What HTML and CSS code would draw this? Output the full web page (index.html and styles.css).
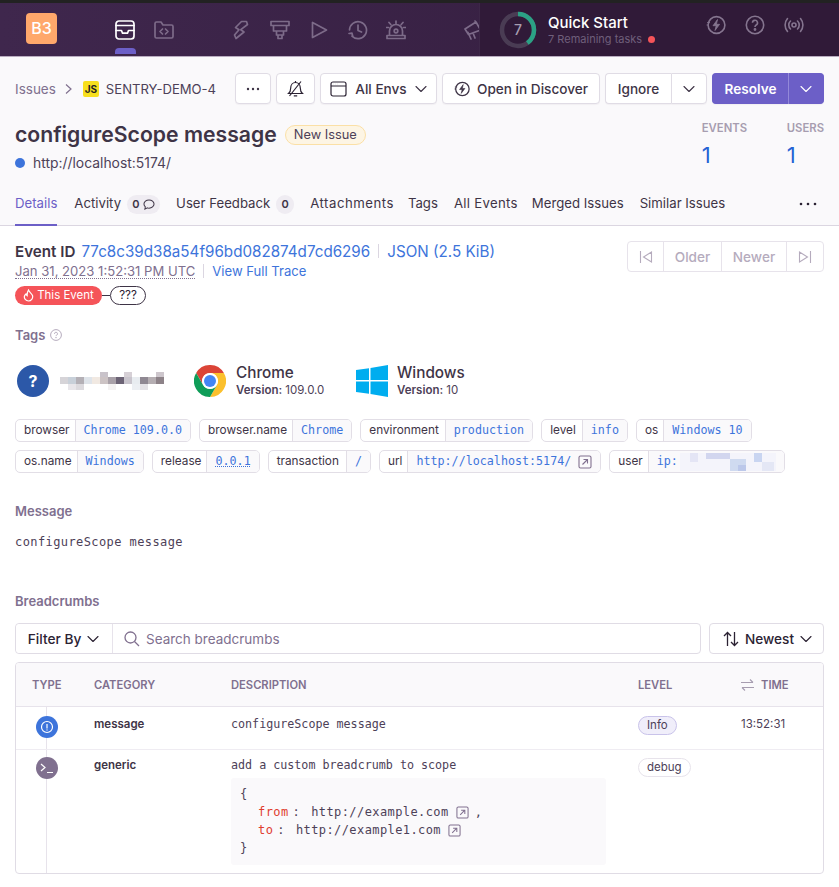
FILE: index.html
```html
<!DOCTYPE html>
<html lang="en">
<head>
    <meta charset="UTF-8">
    <meta name="viewport" content="width=device-width, initial-scale=1.0">
    <title>configureScope message</title>
    <link rel="stylesheet" href="styles.css">
</head>
<body>
    <svg class="sprite" width="0" height="0">
        <defs>
            <symbol id="chev" viewBox="0 0 12 12"><path d="M1 3.5l5 5 5-5" fill="none" stroke="currentColor" stroke-width="1.1" stroke-linecap="round" stroke-linejoin="round"/></symbol>
            <symbol id="ext" viewBox="0 0 14 14"><rect x="1" y="1" width="12" height="12" rx="1.5" fill="none" stroke="currentColor" stroke-width="1.1"/><path d="M4.5 9.5l5-5M5.5 4.5h4v4" fill="none" stroke="currentColor" stroke-width="1.1"/></symbol>
            <symbol id="bolt" viewBox="0 0 20 20"><circle cx="10.5" cy="10" r="8.4" fill="none" stroke="currentColor" stroke-width="1.6"/><path d="M1 7.5h3M0.5 10h2M11.5 4.5L7 10.7h3.2L9 15.5l4.6-6.2h-3.2z" fill="currentColor" stroke="currentColor" stroke-width="0.8" stroke-linejoin="round"/></symbol>
        </defs>
    </svg>

    <nav class="topbar">
        <div class="nav-left">
            <div class="org-badge">B3</div>
            <div class="nav-icons">
                <a class="nav-item active">
                    <svg viewBox="0 0 20 20"><rect x="1" y="1" width="18" height="18" rx="3"/><path d="M1 5.5h18M1 10.5h5.5l1 2.7h5l1-2.7H19"/></svg>
                </a>
                <a class="nav-item">
                    <svg viewBox="0 0 20 20"><path d="M1 3.5A1.5 1.5 0 0 1 2.500 2h4.500l2 3h8.500A1.500 1.500 0 0 1 19 6.500v10a1.500 1.500 0 0 1-1.500 1.500h-15A1.500 1.500 0 0 1 1 16.500z"/><path d="M8.500 9L6 11.500 8.500 14M11.500 9L14 11.500 11.500 14"/></svg>
                </a>
                <a class="nav-item gap">
                    <svg viewBox="0 0 20 20"><path d="M10.500 1.500L4.500 7.500l3.500 2.200L3.500 15l1.500 3.500 8-6.500-3.200-2.300L16.500 4.500l-1-3z"/></svg>
                </a>
                <a class="nav-item">
                    <svg viewBox="0 0 20 20"><path d="M1 1.500h18v4H1zM3.500 5.500v5.500h13V5.500M6.500 11v4h7v-4M8 15v3.500h4V15"/></svg>
                </a>
                <a class="nav-item">
                    <svg viewBox="0 0 20 20"><path d="M3.500 2.500v15L17.500 10z"/></svg>
                </a>
                <a class="nav-item">
                    <svg viewBox="0 0 20 20"><path d="M1.500 10A8.500 8.500 0 1 1 4 16.200M1 13.500l3-.3.800 3.300M10 5v5.500l3.500 1.500"/></svg>
                </a>
                <a class="nav-item siren">
                    <svg viewBox="0 0 20 20"><path d="M1 18.500h18v-3H1zM3.500 15.500V11a6.500 6.500 0 0 1 13 0v4.500M10 1v2.500M3 2.500l1.800 2M17 2.500l-1.800 2M0 7.500h2.500M17.500 7.500H20"/><circle cx="10" cy="11" r="1.800"/></svg>
                </a>
                <a class="nav-item gap wide">
                    <svg viewBox="0 0 20 20"><path d="M2 9l11-7 4.500 8-12 4.500zM5 12.500L8 19M10 13l2 5M13 2l-1-1"/></svg>
                </a>
            </div>
        </div>
        <div class="quick">
            <svg class="ring" width="38" height="38" viewBox="0 0 38 38">
                <circle cx="19" cy="19" r="16" fill="none" stroke="#4a3c54" stroke-width="4.500"/>
                <circle cx="19" cy="19" r="16" fill="none" stroke="#2ba185" stroke-width="4.500" stroke-dasharray="40 101" transform="rotate(-90 19 19)"/>
                <text x="19" y="24" text-anchor="middle" class="ring-num">7</text>
            </svg>
            <div class="quick-text">
                <div class="quick-title">Quick Start</div>
                <div class="quick-sub">7 Remaining tasks <span class="red-dot"></span></div>
            </div>
            <div class="quick-icons">
                <svg width="20" height="20"><use href="#bolt"/></svg>
                <svg width="20" height="20" viewBox="0 0 20 20" fill="none" stroke="currentColor" stroke-width="1.600"><circle cx="10" cy="10" r="8.700"/><path d="M7.500 7.800a2.500 2.500 0 1 1 3.700 2.200c-.8.500-1.200 1-1.200 2"/><circle cx="10" cy="14.500" r=".6" fill="currentColor"/></svg>
                <svg width="20" height="20" viewBox="0 0 20 20" fill="none" stroke="currentColor" stroke-width="1.600" stroke-linecap="round"><circle cx="10" cy="10" r="2"/><path d="M6.500 6a5.500 5.500 0 0 0 0 8M13.500 6a5.500 5.500 0 0 1 0 8M3.500 3.500a10 10 0 0 0 0 13M16.500 3.500a10 10 0 0 1 0 13"/></svg>
            </div>
        </div>
    </nav>

    <header class="issue-header">
        <div class="crumb-row">
            <div class="crumbs">
                <span class="crumb-link">Issues</span>
                <svg class="crumb-sep" width="10" height="12" viewBox="0 0 10 12"><path d="M2 1.500L7 6l-5 4.500" fill="none" stroke="currentColor" stroke-width="1.200"/></svg>
                <span class="js-badge">JS</span>
                <span class="crumb-id">SENTRY-DEMO-4</span>
            </div>
            <div class="actions">
                <button class="btn btn-more">
                    <svg width="16" height="4" viewBox="0 0 16 4" fill="#3e3446"><circle cx="3" cy="2" r="1.200"/><circle cx="8" cy="2" r="1.200"/><circle cx="13" cy="2" r="1.200"/></svg>
                </button>
                <button class="btn btn-mute">
                    <svg width="17" height="17" viewBox="0 0 17 17" fill="none" stroke="#2b2233" stroke-width="1.200"><path d="M1.500 13.500h14c-1.300-1-2.200-2-2.200-5.500 0-3-2-5.500-4.800-5.500S3.700 5 3.700 8c0 3.500-.9 4.500-2.200 5.500zM6.800 15.800h3.400M8.500 1v1.500M14 1.500L2.500 16"/></svg>
                </button>
                <button class="btn btn-envs">
                    <svg width="17" height="16" viewBox="0 0 17 16" fill="none" stroke="#2b2233" stroke-width="1.200"><rect x="1" y="1" width="15" height="14" rx="2"/><path d="M1 5h15M3.500 3h.1M5.500 3h.1M7.500 3h.1"/></svg>
                    <span>All Envs</span>
                    <svg class="chev" width="12" height="12"><use href="#chev"/></svg>
                </button>
                <button class="btn btn-discover">
                    <svg width="16" height="16"><use href="#bolt"/></svg>
                    <span>Open in Discover</span>
                </button>
                <div class="btn-group">
                    <button class="btn btn-ignore">Ignore</button>
                    <button class="btn btn-caret"><svg class="chev" width="12" height="12"><use href="#chev"/></svg></button>
                </div>
                <div class="btn-group primary">
                    <button class="btn btn-ignore btn-resolve">Resolve</button>
                    <button class="btn btn-caret"><svg class="chev" width="12" height="12"><use href="#chev"/></svg></button>
                </div>
            </div>
        </div>

        <div class="title-row">
            <div>
                <div class="title-line">
                    <h1>configureScope message</h1>
                    <span class="new-tag">New Issue</span>
                </div>
                <div class="sub-line"><span class="blue-dot"></span>http://localhost:5174/</div>
            </div>
            <div class="stats">
                <div class="stat stat-events"><div class="stat-label">EVENTS</div><div class="stat-num">1</div></div>
                <div class="stat"><div class="stat-label">USERS</div><div class="stat-num">1</div></div>
            </div>
        </div>

        <div class="tabs">
            <a class="tab selected">Details</a>
            <a class="tab">Activity <span class="count">0 <svg width="12" height="11" viewBox="0 0 13 12" fill="none" stroke="currentColor" stroke-width="1.100"><path d="M6.500 1C3.500 1 1 3 1 5.500c0 1.200.6 2.300 1.500 3L2 11l2.800-1.300c.5.200 1.100.3 1.700.3 3 0 5.500-2 5.500-4.500S9.500 1 6.500 1z"/></svg></span></a>
            <a class="tab">User Feedback <span class="count">0</span></a>
            <a class="tab tab-attach">Attachments</a>
            <a class="tab">Tags</a>
            <a class="tab tab-events">All Events</a>
            <a class="tab">Merged Issues</a>
            <a class="tab">Similar Issues</a>
            <span class="tab-more"><svg width="18" height="4" viewBox="0 0 18 4" fill="#2b2233"><circle cx="2" cy="2" r="1.300"/><circle cx="9" cy="2" r="1.300"/><circle cx="16" cy="2" r="1.300"/></svg></span>
        </div>
    </header>

    <main class="content">
        <section class="event-row">
            <div>
                <div class="event-line">
                    <b>Event ID</b> <a class="link">77c8c39d38a54f96bd082874d7cd6296</a>
                    <span class="pipe"></span>
                    <a class="link">JSON (2.5 KiB)</a>
                </div>
                <div class="event-line second">
                    <span class="event-date">Jan 31, 2023 1:52:31 PM UTC</span>
                    <span class="pipe"></span>
                    <a class="link">View Full Trace</a>
                </div>
            </div>
            <div class="pager">
                <span class="pg pg-icon"><svg width="14" height="12" viewBox="0 0 14 12" fill="none" stroke="currentColor" stroke-width="1.100"><path d="M1.500 0v12M12.500 1v10L4.500 6z"/></svg></span>
                <span class="pg pg-older">Older</span>
                <span class="pg pg-newer">Newer</span>
                <span class="pg pg-icon"><svg width="14" height="12" viewBox="0 0 14 12" fill="none" stroke="currentColor" stroke-width="1.100"><path d="M12.500 0v12M1.500 1v10L9.500 6z"/></svg></span>
            </div>
        </section>

        <div class="trail">
            <span class="this-event">
                <svg width="11" height="13" viewBox="0 0 11 13" fill="none" stroke="#fff" stroke-width="1.200"><path d="M5.500 1c.5 2 3 3 4 5.500C10.300 9.500 8 12 5.500 12S.7 9.500 1.500 7c.3-1 1-1.500 1.500-2 .2 1 .6 1.500 1.200 1.800C4 4.500 4.500 2.500 5.500 1z"/></svg>
                This Event
            </span>
            <span class="trail-line"></span>
            <span class="unknown">???</span>
        </div>

        <h2 class="section-title tags-title">Tags
            <svg width="12" height="12" viewBox="0 0 12 12" fill="none" stroke="#b5abbd"><circle cx="6" cy="6" r="5.400"/><path d="M4.500 4.800a1.500 1.500 0 1 1 2.200 1.300c-.5.300-.7.500-.7 1"/><circle cx="6" cy="8.700" r=".3"/></svg>
        </h2>

        <div class="contexts">
            <div class="context ctx-user">
                <span class="q-icon">?</span>
                <svg class="mosaic" width="104" height="18" viewBox="0 0 104 18">
                    <g fill="#e0dce0"><rect x="40" y="0" width="8" height="5" fill="#c9c3ca"/><rect x="64" y="0" width="8" height="5" fill="#d6d0d6"/><rect x="96" y="0" width="8" height="5" fill="#cdc6cc"/>
                    <rect x="0" y="5" width="8" height="7" fill="#d6d4d8"/><rect x="8" y="5" width="8" height="7" fill="#c8d0d9"/><rect x="16" y="5" width="8" height="7" fill="#b4b0b6"/><rect x="24" y="5" width="8" height="7" fill="#dfe4ea"/><rect x="32" y="5" width="8" height="7" fill="#f1e9e2"/><rect x="40" y="5" width="8" height="7" fill="#ccc3c4"/><rect x="48" y="5" width="8" height="7" fill="#a8a0a8"/><rect x="56" y="5" width="8" height="7" fill="#6c6375"/><rect x="64" y="5" width="8" height="7" fill="#c9c5cd"/><rect x="72" y="5" width="8" height="7" fill="#e8ecf0"/><rect x="80" y="5" width="8" height="7" fill="#8f8892"/><rect x="88" y="5" width="8" height="7" fill="#b5aeb2"/><rect x="96" y="5" width="8" height="7" fill="#8d8288"/>
                    <rect x="8" y="12" width="8" height="6" fill="#e8e6ea"/><rect x="16" y="12" width="8" height="6" fill="#dcdade"/><rect x="48" y="12" width="8" height="6" fill="#f4f2f2"/><rect x="72" y="12" width="8" height="6" fill="#eceff3"/><rect x="80" y="12" width="8" height="6" fill="#e4e2e6"/></g>
                </svg>
            </div>
            <div class="context ctx-chrome">
                <svg width="32" height="32" viewBox="0 0 32 32">
                    <path fill="#db4437" d="M29.860 8A16 16 0 0 0 2.140 8L9.070 20A8 8 0 0 1 16 8z"/>
                    <path fill="#fbc02d" transform="rotate(120 16 16)" d="M29.860 8A16 16 0 0 0 2.140 8L9.070 20A8 8 0 0 1 16 8z"/>
                    <path fill="#0f9d58" transform="rotate(240 16 16)" d="M29.860 8A16 16 0 0 0 2.140 8L9.070 20A8 8 0 0 1 16 8z"/>
                    <circle cx="16" cy="16" r="7.800" fill="#fff"/>
                    <circle cx="16" cy="16" r="6" fill="#4285f4"/>
                </svg>
                <div class="ctx-text"><div class="ctx-name">Chrome</div><div class="ctx-ver"><b>Version:</b> 109.0.0</div></div>
            </div>
            <div class="context ctx-win">
                <svg width="32" height="32" viewBox="0 0 32 32" fill="#00adef">
                    <path d="M0 5l13-1.800V15H0zM14.500 3L32 0v15H14.500zM0 16.500h13v12.300L0 27zM14.500 16.500H32V32l-17.500-2.900z"/>
                </svg>
                <div class="ctx-text"><div class="ctx-name">Windows</div><div class="ctx-ver"><b>Version:</b> 10</div></div>
            </div>
        </div>

        <div class="tag-list">
            <div class="tag-row">
                <span class="tag"><span class="tag-key">browser</span><span class="tag-val">Chrome 109.0.0</span></span>
                <span class="tag"><span class="tag-key">browser.name</span><span class="tag-val">Chrome</span></span>
                <span class="tag"><span class="tag-key key-mid">environment</span><span class="tag-val">production</span></span>
                <span class="tag"><span class="tag-key key-mid">level</span><span class="tag-val">info</span></span>
                <span class="tag"><span class="tag-key">os</span><span class="tag-val">Windows 10</span></span>
            </div>
            <div class="tag-row">
                <span class="tag"><span class="tag-key">os.name</span><span class="tag-val">Windows</span></span>
                <span class="tag"><span class="tag-key">release</span><span class="tag-val"><u>0.0.1</u></span></span>
                <span class="tag"><span class="tag-key key-wide">transaction</span><span class="tag-val">/</span></span>
                <span class="tag"><span class="tag-key">url</span><span class="tag-val">http://localhost:5174/<svg class="ext" width="14" height="14"><use href="#ext"/></svg></span></span>
                <span class="tag"><span class="tag-key">user</span><span class="tag-val user-val">ip:<svg class="mosaic-ip" width="96" height="18" viewBox="0 0 96 18"><rect width="96" height="18" fill="#f4f4fb"/><rect x="10" y="0" width="8" height="9" fill="#e4e5f5"/><rect x="26" y="0" width="24" height="6" fill="#d2d6ef"/><rect x="50" y="6" width="16" height="12" fill="#cfdaf0"/><rect x="58" y="12" width="8" height="6" fill="#bcc8ea"/><rect x="74" y="0" width="8" height="9" fill="#c9d5f1"/><rect x="82" y="9" width="12" height="9" fill="#e4e7f5"/></svg></span></span>
            </div>
        </div>

        <h2 class="section-title msg-title">Message</h2>
        <pre class="message">configureScope message</pre>

        <h2 class="section-title bc-title">Breadcrumbs</h2>
        <div class="bc-controls">
            <div class="bc-search">
                <button class="filter-btn">Filter By <svg class="chev" width="12" height="12"><use href="#chev"/></svg></button>
                <div class="search-box">
                    <svg width="16" height="16" viewBox="0 0 16 16" fill="none" stroke="#80708f" stroke-width="1.300"><circle cx="6.500" cy="6.500" r="5.500"/><path d="M10.500 10.500L15 15"/></svg>
                    <span>Search breadcrumbs</span>
                </div>
            </div>
            <button class="sort-btn">
                <svg width="16" height="16" viewBox="0 0 16 16" fill="none" stroke="#2b2233" stroke-width="1.300"><path d="M4.500 15V1.500M1 5l3.500-3.500L8 5M11.500 1v13.500M8 11l3.500 3.500L15 11"/></svg>
                Newest <svg class="chev" width="12" height="12"><use href="#chev"/></svg>
            </button>
        </div>

        <div class="bc-table">
            <span class="bc-rail"></span>
            <div class="bc-grid bc-head">
                <span class="col-type">TYPE</span>
                <span>CATEGORY</span>
                <span>DESCRIPTION</span>
                <span>LEVEL</span>
                <span class="time-head"><svg width="13" height="12" viewBox="0 0 13 12" fill="none" stroke="#a79db0" stroke-width="1.100"><path d="M0 3.500h12M9 .5l3 3M13 8.500H1M4 11.500l-3-3"/></svg>TIME</span>
            </div>
            <div class="bc-grid bc-row row-one">
                <span class="type-icon info"><svg width="14" height="14" viewBox="0 0 14 14" fill="none" stroke="#fff" stroke-width="1.200"><circle cx="7" cy="7" r="5.500"/><path d="M7 4v4.500"/><circle cx="7" cy="10" r=".2"/></svg></span>
                <span class="cat">message</span>
                <span class="desc">configureScope message</span>
                <span><span class="level l-info">Info</span></span>
                <span class="time">13:52:31</span>
            </div>
            <div class="bc-grid bc-row row-two">
                <span class="type-icon debug"><svg width="14" height="12" viewBox="0 0 14 12" fill="none" stroke="#fff" stroke-width="1.200"><path d="M1 2l4 3.500L1 9M7 10.500h6"/></svg></span>
                <span class="cat">generic</span>
                <div class="desc">
                    add a custom breadcrumb to scope
                    <div class="code">
                        <div>{</div>
                        <div class="indent"><span class="key">from</span><span class="colon">:</span>http://example.com<svg class="ext-sm" width="13" height="13"><use href="#ext"/></svg><span class="comma">,</span></div>
                        <div class="indent"><span class="key">to</span><span class="colon">:</span>http://example1.com<svg class="ext-sm" width="13" height="13"><use href="#ext"/></svg></div>
                        <div>}</div>
                    </div>
                </div>
                <span class="level-cell"><span class="level">debug</span></span>
                <span></span>
            </div>
        </div>
    </main>
</body>
</html>
```
FILE: styles.css
```css
* {
    box-sizing: border-box;
}
body {
    margin: 0;
    background-color: #fff;
    color: #2b2233;
    font-family: Inter, 'Noto Sans', sans-serif;
    font-size: 13.5px;
    overflow-x: hidden;
}
.sprite {
    position: absolute;
}
button {
    font-family: inherit;
    background: #fff;
    cursor: pointer;
}
a {
    text-decoration: none;
}

/* top nav */
.topbar {
    display: flex;
    height: 57px;
    border-top: 3px solid #222;
    border-bottom: 1px solid #b9acc0;
    background: linear-gradient(90deg, #3f274d, #341d3e);
}
.nav-left {
    display: flex;
    width: 479px;
    flex: none;
    overflow: hidden;
    padding-left: 26px;
}
.org-badge {
    width: 31px;
    height: 31px;
    margin-top: 10px;
    flex: none;
    border-radius: 4px;
    background-color: #ffa86b;
    color: #fff;
    font-size: 16px;
    font-weight: 500;
    line-height: 31px;
    text-align: center;
}
.nav-icons {
    display: flex;
    margin-left: 58px;
}
.nav-item {
    position: relative;
    width: 21px;
    margin-right: 18px;
    padding-top: 17px;
    flex: none;
}
.nav-item svg {
    display: block;
    width: 20px;
    height: 20px;
    fill: none;
    stroke: #7d6b89;
    stroke-width: 1.700;
    stroke-linejoin: round;
    stroke-linecap: round;
}
.nav-item.gap {
    margin-left: 38px;
}
.nav-item.siren {
    margin-left: -1px;
}
.nav-item.wide {
    margin-left: 38px;
}
.nav-item.active svg {
    stroke: #fff;
}
.nav-item.active::after {
    content: "";
    position: absolute;
    left: 0;
    bottom: 2px;
    width: 21px;
    height: 6px;
    border-radius: 4px 4px 0 0;
    background-color: #6c5fc7;
}
.quick {
    display: flex;
    flex: 1;
    align-items: center;
    padding-left: 19px;
    background-color: #301a38;
    border-left: 1px solid #3d2748;
}
.ring {
    flex: none;
}
.ring-num {
    fill: #a79db0;
    font-size: 14px;
    font-weight: 500;
}
.quick-text {
    margin-left: 11px;
    padding-top: 1px;
}
.quick-title {
    color: #fff;
    font-size: 15px;
    font-weight: 500;
    line-height: 18px;
}
.quick-sub {
    color: #6f5f7b;
    font-size: 11px;
    line-height: 15px;
}
.red-dot {
    display: inline-block;
    width: 7px;
    height: 7px;
    margin-left: 3px;
    border-radius: 50%;
    background-color: #f55459;
}
.quick-icons {
    display: flex;
    gap: 19px;
    margin-left: 51px;
    padding-bottom: 10px;
    color: #85758f;
}

/* issue header */
.issue-header {
    height: 169px;
    padding: 16px 15px 0;
    background-color: #faf9fb;
    border-bottom: 1px solid #dbd6e1;
}
.crumb-row {
    display: flex;
    justify-content: space-between;
    height: 31px;
}
.crumbs {
    display: flex;
    align-items: center;
}
.crumb-link {
    color: #80708f;
}
.crumb-sep {
    margin: 0 9px 0 8px;
    color: #80708f;
}
.js-badge {
    width: 16px;
    height: 16px;
    margin-right: 7px;
    border-radius: 2px;
    background-color: #f7df1e;
    color: #222;
    font-size: 10px;
    font-weight: 700;
    line-height: 17px;
    text-align: center;
}
.crumb-id {
    color: #4d4158;
    font-size: 13.100px;
}
.actions {
    display: flex;
    gap: 5px;
}
.btn {
    display: flex;
    height: 31px;
    align-items: center;
    justify-content: center;
    padding: 0;
    border: 1px solid #e0dce5;
    border-radius: 4px;
    color: #3e3446;
    font-size: 13.600px;
    font-weight: 500;
    box-shadow: 0 1px 1px rgba(43, 34, 51, 0.04);
}
.btn-more {
    width: 36px;
}
.btn-mute {
    width: 39px;
}
.btn-envs {
    width: 117px;
    gap: 8px;
}
.btn-discover {
    width: 158px;
    gap: 7px;
}
.btn-group {
    display: flex;
}
.btn-ignore {
    width: 66px;
    border-radius: 4px 0 0 4px;
    border-right: 0;
}
.btn-caret {
    width: 36px;
    border-radius: 0 4px 4px 0;
}
.primary .btn {
    background-color: #6c5fc7;
    border-color: #6c5fc7;
    color: #fff;
}
.primary .btn-resolve {
    width: 76px;
    font-weight: 600;
}
.primary .btn-caret {
    border-left-color: #9389d9;
}
.title-row {
    display: flex;
    justify-content: space-between;
    height: 84px;
    padding-top: 17px;
}
.title-line {
    display: flex;
    align-items: center;
    gap: 8px;
}
h1 {
    margin: 0;
    font-size: 21.200px;
    font-weight: 600;
    line-height: 27px;
    color: #3e3446;
}
.new-tag {
    height: 20px;
    margin-top: 1px;
    padding: 0 8px;
    border: 1px solid #fbe0a6;
    border-radius: 10px;
    background-color: #fdf5e4;
    color: #4d4158;
    font-size: 12.800px;
    line-height: 18px;
}
.sub-line {
    display: flex;
    align-items: center;
    gap: 8px;
    margin-top: 6px;
    color: #4d4158;
    font-size: 13.900px;
    line-height: 18px;
}
.blue-dot {
    width: 10px;
    height: 10px;
    border-radius: 50%;
    background-color: #3d74db;
}
.stats {
    display: flex;
}
.stat-events {
    width: 85px;
}
.stat-label {
    color: #a79db0;
    font-size: 11.300px;
    font-weight: 600;
    line-height: 14px;
}
.stat-num {
    margin-top: 6px;
    color: #2562d4;
    font-size: 22px;
    line-height: 28px;
}
.tabs {
    display: flex;
    height: 37px;
    margin-top: 1px;
}
.tab {
    display: block;
    height: 37px;
    margin-right: 16px;
    color: #3e3446;
    font-size: 13.200px;
    line-height: 28px;
    white-space: nowrap;
}
.tab.selected {
    margin-right: 17px;
    color: #6c5fc7;
    border-bottom: 2px solid #6c5fc7;
}
.tab-attach {
    margin-right: 14px;
    letter-spacing: 0.5px;
}
.tab-events {
    margin-right: 14px;
    letter-spacing: 0.3px;
}
.count {
    display: inline-flex;
    align-items: center;
    gap: 3px;
    height: 19px;
    margin-left: 2px;
    padding: 0 5.500px;
    border-radius: 10px;
    background-color: #efecf2;
    font-size: 11px;
    font-weight: 600;
}
.tab-more {
    margin-left: auto;
    margin-right: 7px;
    line-height: 24px;
}

/* main */
.content {
    padding: 0 15px;
}
.event-row {
    display: flex;
    justify-content: space-between;
    padding-top: 15px;
    height: 59px;
}
.event-line {
    display: flex;
    align-items: center;
    gap: 4px;
    height: 20px;
    font-size: 15.200px;
    color: #3e3446;
    white-space: nowrap;
}
.event-line b {
    margin-right: 2px;
    font-weight: 600;
}
.event-line.second {
    font-size: 13.100px;
}
.link {
    color: #3d74db;
}
.pipe {
    width: 1px;
    height: 14px;
    margin: 0 4px;
    background-color: #dbd6e1;
}
.event-date {
    color: #80708f;
    border-bottom: 1px dotted #80708f;
    line-height: 14px;
}
.pager {
    display: flex;
    height: 31px;
    border: 1px solid #e7e3eb;
    border-radius: 4px;
    color: #b5abbd;
    font-size: 13.600px;
    font-weight: 500;
}
.pg {
    display: flex;
    align-items: center;
    justify-content: center;
    border-right: 1px solid #e7e3eb;
}
.pg:last-child {
    border-right: 0;
}
.pg-icon {
    width: 36px;
}
.pg-older {
    width: 58px;
}
.pg-newer {
    width: 65px;
}
.trail {
    display: flex;
    align-items: center;
    height: 20px;
}
.this-event {
    display: flex;
    align-items: center;
    gap: 3px;
    width: 87px;
    height: 19px;
    justify-content: center;
    border-radius: 10px;
    background-color: #f55459;
    color: #fff;
    font-size: 11.500px;
}
.trail-line {
    width: 8px;
    height: 1px;
    background-color: #3e3446;
}
.unknown {
    width: 36px;
    height: 19px;
    border: 1px solid #3e3446;
    border-radius: 10px;
    font-size: 11.500px;
    line-height: 17px;
    text-align: center;
}
.section-title {
    margin: 0;
    color: #80708f;
    font-size: 13px;
    font-weight: 600;
    line-height: 18px;
}
.tags-title {
    display: flex;
    align-items: center;
    gap: 5px;
    margin-top: 21px;
}
.contexts {
    display: flex;
    height: 33px;
    margin-top: 20px;
}
.context {
    display: flex;
    align-items: center;
}
.ctx-user {
    width: 179px;
    padding-left: 2px;
}
.q-icon {
    width: 32px;
    height: 32px;
    border-radius: 50%;
    background-color: #2c58a8;
    color: #fff;
    font-size: 16px;
    font-weight: 700;
    line-height: 32px;
    text-align: center;
}
.mosaic {
    margin-left: 11px;
}
.ctx-chrome {
    width: 162px;
}
.ctx-text {
    margin-left: 10px;
}
.ctx-win .ctx-text {
    margin-left: 9px;
}
.ctx-name {
    font-size: 15.300px;
    font-weight: 500;
    line-height: 18px;
    color: #3e3446;
}
.ctx-ver {
    font-size: 11.500px;
    line-height: 16px;
    color: #4d4158;
}
.ctx-ver b {
    font-weight: 600;
}
.tag-list {
    margin-top: 22px;
}
.tag-row {
    display: flex;
    gap: 8px;
    margin-bottom: 8px;
}
.tag {
    display: flex;
    flex: none;
    height: 23px;
    border: 1px solid #e2dee6;
    border-radius: 5px;
    font-size: 11.800px;
    line-height: 21px;
    white-space: nowrap;
    overflow: hidden;
}
.tag-key {
    padding: 0 5px 0 8px;
    color: #3e3446;
    border-right: 1px solid #e2dee6;
}
.key-mid {
    padding-right: 6px;
}
.key-wide {
    padding-right: 7px;
}
.tag-val {
    display: flex;
    align-items: center;
    padding: 0 8px;
    background-color: #faf9fb;
    color: #3d74db;
    font-family: 'DejaVu Sans Mono', monospace;
    font-size: 11.700px;
}
.tag-val u {
    text-decoration: underline dotted;
}
.ext {
    margin-left: 7px;
    color: #80708f;
}
.mosaic-ip {
    margin-left: 2px;
}
.msg-title {
    margin-top: 29px;
}
.message {
    margin: 14px 0 0;
    color: #4d4158;
    font-family: 'DejaVu Sans Mono', monospace;
    font-size: 12px;
    letter-spacing: 0.41px;
    line-height: 16px;
}
.bc-title {
    margin-top: 42px;
}
.bc-controls {
    display: flex;
    gap: 8px;
    margin-top: 13px;
}
.bc-search {
    display: flex;
    width: 686px;
    height: 31px;
    border: 1px solid #e0dce5;
    border-radius: 4px;
}
.filter-btn {
    display: flex;
    width: 97px;
    align-items: center;
    justify-content: center;
    gap: 6px;
    padding: 0 1px 0 0;
    border: 0;
    border-right: 1px solid #e7e3eb;
    border-radius: 4px 0 0 4px;
    color: #2b2233;
    font-size: 13.700px;
    font-weight: 500;
}
.search-box {
    display: flex;
    align-items: center;
    gap: 6px;
    padding-left: 11px;
    color: #80708f;
    font-size: 13.500px;
}
.sort-btn {
    display: flex;
    width: 115px;
    height: 31px;
    align-items: center;
    justify-content: center;
    gap: 6px;
    padding: 0 0 0 2px;
    border: 1px solid #e0dce5;
    border-radius: 4px;
    color: #2b2233;
    font-size: 13.600px;
    font-weight: 500;
}
.bc-table {
    position: relative;
    height: 212px;
    margin-top: 8px;
    border: 1px solid #e0dce5;
    border-radius: 4px;
    overflow: hidden;
}
.bc-rail {
    position: absolute;
    top: 43px;
    bottom: 0;
    left: 30px;
    width: 1px;
    background-color: #e7e3eb;
}
.bc-grid {
    display: grid;
    grid-template-columns: 78px 137px 407px 103px 1fr;
}
.bc-head {
    height: 44px;
    align-items: center;
    background-color: #faf9fb;
    border-bottom: 1px solid #e7e3eb;
    color: #80708f;
    font-size: 11.200px;
    font-weight: 600;
}
.col-type {
    padding-left: 16px;
}
.time-head {
    display: flex;
    align-items: center;
    gap: 7px;
}
.bc-row {
    position: relative;
    font-size: 12px;
}
.row-one {
    height: 43px;
    padding-top: 9px;
    border-bottom: 1px solid #efecf2;
}
.row-two {
    padding-top: 7px;
}
.level-cell {
    padding-top: 1px;
}
.type-icon {
    display: flex;
    position: relative;
    width: 22px;
    height: 22px;
    margin-left: 20px;
    align-items: center;
    justify-content: center;
    border-radius: 50%;
}
.type-icon.info {
    background-color: #3d74db;
}
.type-icon.debug {
    background-color: #80708f;
}
.cat {
    padding-top: 1px;
    color: #3e3446;
    font-size: 11.500px;
    font-weight: 600;
    line-height: 15px;
}
.desc {
    padding-top: 1px;
    color: #4d4158;
    font-family: 'DejaVu Sans Mono', monospace;
    font-size: 11.700px;
    line-height: 15px;
}
.code {
    width: 375px;
    height: 87px;
    margin-top: 5px;
    padding: 7px 9px;
    border-radius: 3px;
    background-color: #faf9fb;
    font-size: 12px;
    letter-spacing: 0.41px;
    line-height: 18px;
}
.indent {
    display: flex;
    align-items: center;
    padding-left: 18px;
    white-space: pre;
}
.key {
    color: #e03e2f;
}
.colon {
    margin: 0 11px 0 4px;
}
.ext-sm {
    margin-left: 7px;
    color: #80708f;
}
.comma {
    margin-left: 6px;
}
.level {
    display: inline-block;
    height: 19px;
    padding: 0 8px;
    border: 1px solid #e7e3eb;
    border-radius: 10px;
    color: #4d4158;
    font-size: 11.500px;
    line-height: 17px;
}
.l-info {
    background-color: #f0eefa;
    border-color: #c9c3ea;
}
.time {
    padding-top: 1px;
    color: #4d4158;
    font-size: 11.500px;
    line-height: 15px;
}
```
